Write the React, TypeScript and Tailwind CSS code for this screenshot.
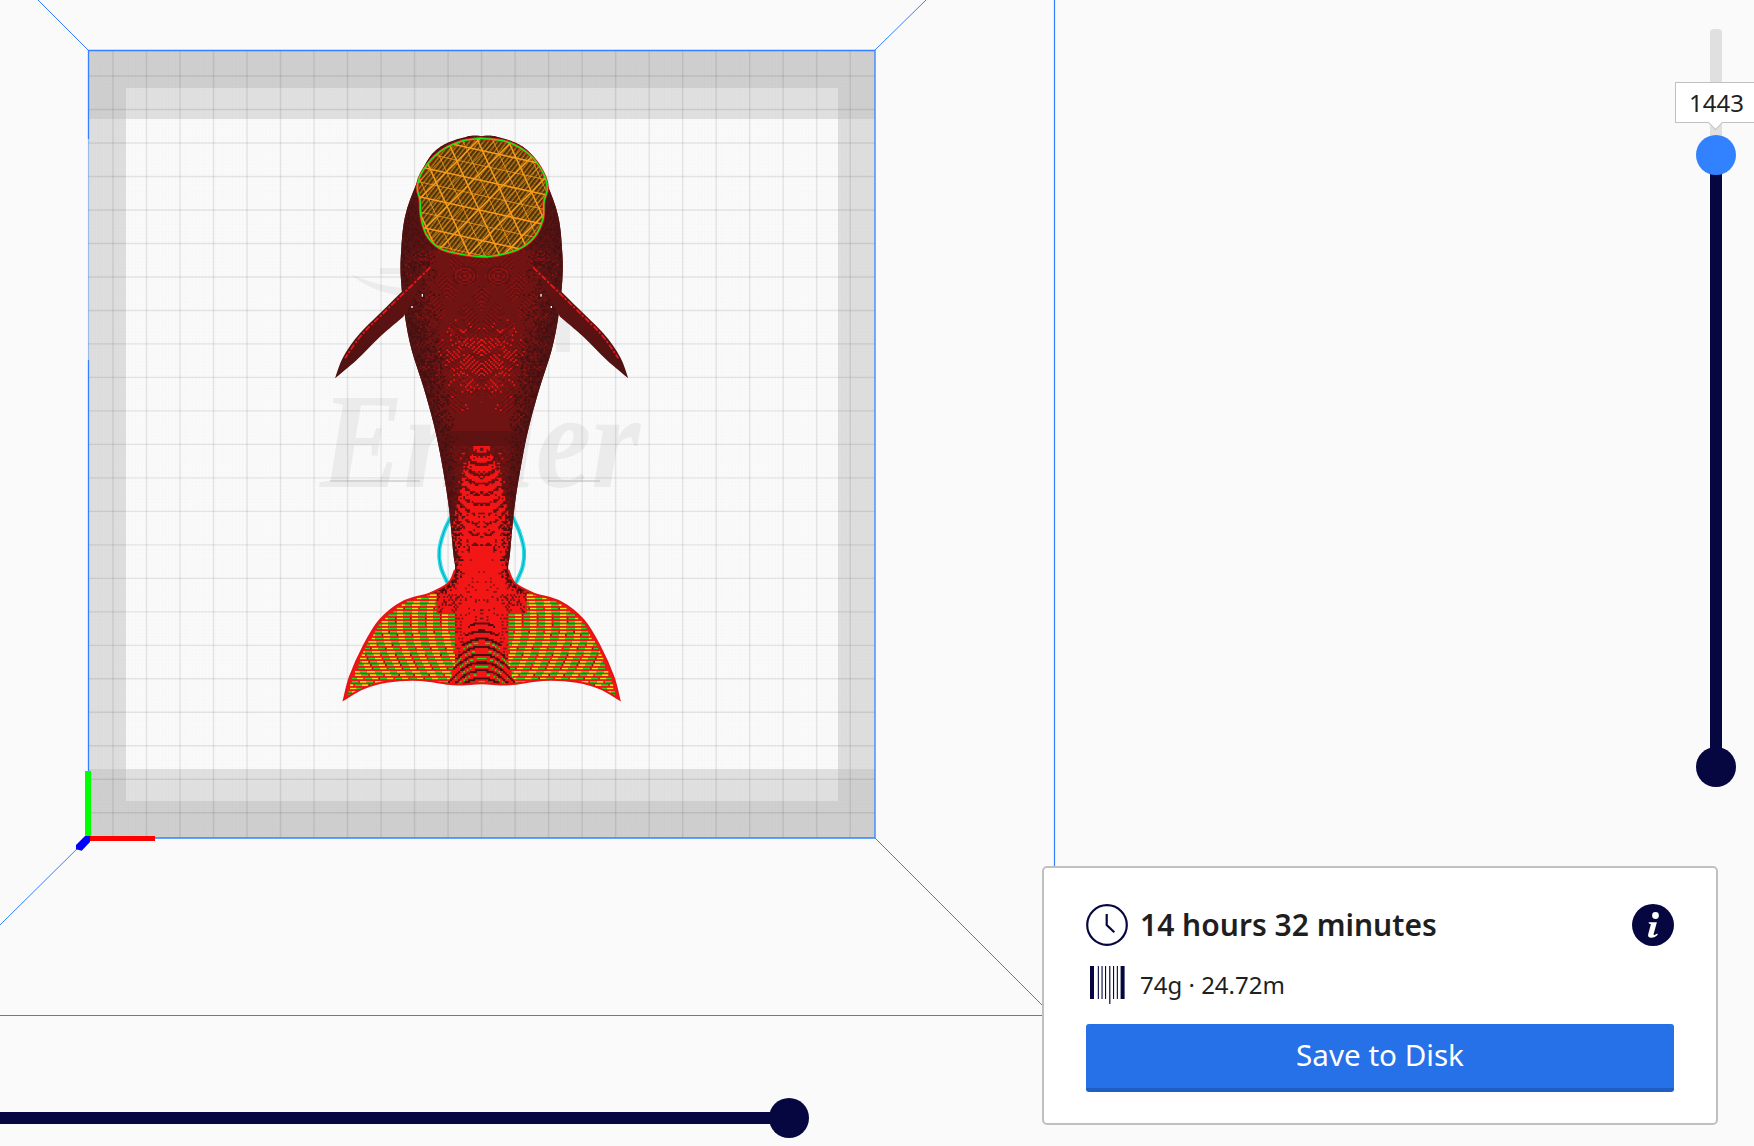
import { useMemo } from "react";

type Pt = [number, number];

const CX = 320 + 485 / 3;
const navy = "#060640";

// outline points are in 3x zoom units, origin at (320,120)
const LEFT: Pt[] = [
  [485, 48], [450, 48], [380, 70], [330, 110], [290, 190], [255, 290], [243, 400], [243, 480], [255, 590],
  [275, 690], [310, 800], [338, 900], [360, 1000], [385, 1150], [400, 1300], [405, 1350], [385, 1390],
  [330, 1420], [250, 1445], [180, 1500], [130, 1580], [90, 1670], [72, 1738],
];
const BOTTOM: Pt[] = [
  [72, 1738], [130, 1705], [200, 1685], [300, 1680], [400, 1693], [485, 1690], [570, 1693], [670, 1680],
  [770, 1685], [840, 1705], [898, 1738],
];
const mirror = (pts: Pt[]): Pt[] => pts.map(([x, y]) => [970 - x, y] as Pt).reverse();
const HEAD: Pt[] = [
  [480, 55], [560, 65], [630, 105], [670, 160], [682, 205], [672, 245], [668, 300], [640, 355], [590, 390],
  [500, 410], [420, 402], [360, 385], [320, 345], [303, 290], [300, 240], [292, 200], [310, 150], [360, 95], [420, 65],
];
const FIN: Pt[] = [[325, 438], [200, 560], [120, 640], [70, 710], [45, 775]];
const FIN_LOW: Pt[] = [[45, 775], [110, 720], [180, 650], [250, 590]];
const RING: Pt[] = [[393, 1190], [372, 1235], [358, 1290], [362, 1340], [382, 1388]];

function curve(p: Pt[]) {
  let d = "";
  for (let i = 0; i < p.length - 1; i++) {
    const a = p[Math.max(i - 1, 0)], b = p[i], c = p[i + 1], e = p[Math.min(i + 2, p.length - 1)];
    d += `C${b[0] + (c[0] - a[0]) / 6} ${b[1] + (c[1] - a[1]) / 6} ${c[0] - (e[0] - b[0]) / 6} ${c[1] - (e[1] - b[1]) / 6} ${c[0]} ${c[1]}`;
  }
  return d;
}
const start = (p: Pt[]) => `M${p[0][0]} ${p[0][1]}`;

const bodyPath = start(LEFT) + curve(LEFT) + curve(BOTTOM) + curve(mirror(LEFT)) + "Z";
const headPath = start(HEAD) + curve([...HEAD, HEAD[0]]) + "Z";
const finPath = start(FIN) + curve(FIN) + curve(FIN_LOW) + "L300 500Z";
const tailEdge = LEFT.slice(15);
const tailPath = start(tailEdge) + curve(tailEdge) + curve(BOTTOM) + curve(mirror(tailEdge));

const COLORS = ["#521414", "#5e1212", "#701313", "#8e1414", "#f21616", "#dce41a", "#22dc1c", "#451010"];

function halfWidth(y: number) {
  const z = (y - 120) * 3;
  for (let i = 0; i < LEFT.length - 1; i++) {
    const [x0, y0] = LEFT[i], [x1, y1] = LEFT[i + 1];
    if (z >= y0 && z <= y1 && y1 > y0) return (485 - (x0 + ((x1 - x0) * (z - y0)) / (y1 - y0))) / 3;
  }
  return 0;
}

function noise(a: number, b: number) {
  const s = Math.sin(a * 12.9898 + b * 78.233) * 43758.5453;
  return s - Math.floor(s);
}

const ramp = (a: number, b: number, v: number) => Math.min(Math.max((v - a) / (b - a), 0), 1);

// rough stand-in for the slicer's moire: returns a palette index per cell
function shade(dx: number, y: number, hw: number, ix: number, iy: number) {
  const r = dx / Math.max(hw, 1);
  const n = noise(ix, iy);
  const tri = Math.abs(((dx / 17) % 2) - 1);
  const wave = Math.sin((y + 15 * tri) * 1.35);

  if (y < 445) {
    const edge = ramp(0.5, 0.95, r);
    if (n < edge) return n < edge * 0.4 ? 7 : 0;
    const eye = Math.hypot(dx - 16, (y - 275) * 1.3);
    if (y < 292 && eye < 13) return Math.sin(eye * 1.5) > 0 ? 3 : 1;
    if (y < 250) return n > 0.5 ? 1 : 2;
    const fade = y > 395 ? (445 - y) / 50 : 1;
    const prob = Math.exp(-(((y - 358) / 26) ** 2)) * Math.max(0, 1 - dx / 62);
    if (wave > 0.7 && n < prob * 1.2) return 4;
    if (wave > 0.6 && n < prob * 2) return 3;
    const env = Math.sin(dx * 0.12 + y * 0.09) * Math.sin(dx * 0.07 - y * 0.05 + 1);
    const v = wave * env * fade;
    if (v > 0.35) return 3;
    if (v < -0.3) return 1;
    return fade < 0.3 ? 1 : 2;
  }

  if (y < 592) {
    const p = ramp(445, 530, y);
    const arc = Math.sin((y + dx * dx * 0.028) * 0.62);
    const edge = ramp(0.55, 0.95, r) * (1 - p * 0.45);
    if (n < edge) return n < edge * 0.4 ? 7 : 0;
    if (y > 550 && dx < 24) return n > 0.95 ? 3 : 4;
    if (r < 0.15 + p * 0.8 && arc > -0.4 && n > 0.2 - p * 0.2) return n > 0.96 ? 1 : 4;
    return n < p * 0.5 ? 4 : n > 0.6 ? 1 : 2;
  }

  // tail: arches down the middle, striped lobes to each side
  const arch = 10 + (y - 620) * 0.36;
  if (y > 620 && dx < arch) {
    const a = Math.sin((y - dx * dx * 0.02) * 0.8);
    if (a > 0.65) return 7;
    if (a < -0.92 && y > 640) return 6;
    return 4;
  }
  if (dx < 20) return n > 0.94 ? 2 : 4;
  if (y < 612 && dx < 44) return n > 0.72 ? 2 : 4;
  if (r > 0.975) return 4;
  if (iy % 2 === 0) return 4;
  if (dx < 26) return n > 0.5 ? 3 : 4;
  const band = Math.sin((dx + 0.006 * (y - 640) ** 2 + (y - 640) * 0.25) * 0.42);
  if (band > 0.1) return 5;
  if (band < -0.1) return 6;
  return n > 0.5 ? 3 : 4;
}

function useMoire() {
  return useMemo(() => {
    const cell = 5 / 3;
    const paths = COLORS.map(() => "");
    for (let iy = 0; iy * cell < 570; iy++) {
      const y = 136 + iy * cell;
      const hw = halfWidth(y);
      const n = Math.ceil((hw + 2) / cell);
      let from = 0;
      let cur = shade(0, y, hw, 0, iy);
      for (let ix = 1; ix <= n; ix++) {
        const c = ix === n ? -1 : shade(ix * cell, y, hw, ix, iy);
        if (c !== cur) {
          const a = (from * cell).toFixed(1), w = ((ix - from) * cell).toFixed(1), h = cell.toFixed(2), t = y.toFixed(1);
          paths[cur] += `M${CX + +a} ${t}h${w}v${h}h-${w}zM${CX - +a} ${t}h-${w}v${h}h${w}z`;
          from = ix;
          cur = c;
        }
      }
    }
    return paths;
  }, []);
}

function PlateGrid() {
  const lines = Array.from({ length: 23 }, (_, i) => i);
  return (
    <>
      <rect x={88} y={50} width={787} height={788} fill="#fafafa" />
      <rect x={126} y={88} width={712} height={713} fill="#e0e0e0" />
      <rect x={126} y={119} width={712} height={650} fill="#fafafa" />
      <rect x={88} y={50} width={787} height={38} fill="#cfcfcf" />
      <rect x={88} y={88} width={38} height={31} fill="#cfcfcf" />
      <rect x={838} y={88} width={37} height={31} fill="#cfcfcf" />
      <rect x={88} y={119} width={38} height={650} fill="#dedede" />
      <rect x={838} y={119} width={37} height={650} fill="#dedede" />
      <rect x={88} y={769} width={38} height={69} fill="#cfcfcf" />
      <rect x={838} y={769} width={37} height={69} fill="#cfcfcf" />
      <rect x={126} y={801} width={712} height={37} fill="#cfcfcf" />
      <rect x={88} y={50} width={787} height={788} fill="url(#fine)" />

      <text x={320} y={487} fontFamily="Liberation Serif" fontStyle="italic" fontWeight={700} fontSize={135} textLength={320} lengthAdjust="spacingAndGlyphs" fill="#ebebeb">
        Ender
      </text>
      <path d="M350 274 Q372 292 402 296 L402 288 Q378 286 350 274Z M380 268 h30 v6 h-30z M556 318 h14 v34 h-14z" fill="#ececec" />
      <path d="M330 481H420M548 481H600" stroke="#c4c4c4" strokeWidth={2} opacity={0.6} />

      {lines.map((i) => (
        <g key={i} stroke="#000" strokeOpacity={0.09} strokeWidth={1.4}>
          <line x1={113 + i * 33.51} x2={113 + i * 33.51} y1={50} y2={838} />
          <line y1={76 + i * 33.49} y2={76 + i * 33.49} x1={88} x2={875} />
        </g>
      ))}

      <g stroke="#3282ff" fill="none" strokeWidth={1}>
        <path d="M38 0L88 50M875 50L926 0M875 838L1043 1006M88 838L0 925" />
        <path d="M88.5 838V360M88.5 139V50.5H875V838H88" strokeWidth={1.3} />
        <path d="M88.5 139V360" strokeOpacity={0.35} strokeWidth={1.3} />
        <path d="M0 1015.5H1043M1054.5 0V867" strokeWidth={1.2} />
      </g>

      <rect x={85} y={771} width={6} height={66} fill="#00ff00" />
      <rect x={90} y={836} width={65} height={5} fill="#ff0000" />
      <path d="M85 836H90V842L81.7 850.7L76 849.3V845Z" fill="#0000ff" />
    </>
  );
}

function Dolphin() {
  const moire = useMoire();
  const fam1 = [-15, 30, 75, 120, 165, 210, 255, 300, 345];
  const fam2 = [430, 482, 535, 587, 640, 692, 745, 797, 850, 902, 955];
  const fam3 = [-1380, -1280, -1180, -1080, -980, -880, -780, -680, -580, -480, -380];
  return (
    <g transform={`translate(320 120) scale(${1 / 3})`}>
      {[RING, mirror(RING)].map((r, i) => (
        <g key={i} fill="none">
          <path d={start(r) + curve(r)} stroke="#22dbe8" strokeWidth={12} />
          <path d={start(r) + curve(r)} stroke="#0d7f90" strokeWidth={2} />
        </g>
      ))}

      <path d={bodyPath} fill="#5e1212" />
      <g clipPath="url(#bodyClip)">
        <g transform="scale(3) translate(-320 -120)">
          {moire.map((d, i) => (
            <path key={i} d={d} fill={COLORS[i]} />
          ))}
        </g>
      </g>
      <path d={tailPath} fill="none" stroke="#e81414" strokeWidth={6} />

      {[false, true].map((flip) => (
        <g key={String(flip)} transform={flip ? "translate(970 0) scale(-1 1)" : undefined}>
          <path d={finPath} fill="url(#finFill)" />
          <path d={start(FIN) + curve(FIN.slice(0, 4))} fill="none" stroke="#f01818" strokeWidth={5} strokeDasharray="18 5 7 6" transform="translate(5 5)" />
          <rect x={305} y={522} width={4} height={8} fill="#fff" />
          <rect x={274} y={558} width={4} height={6} fill="#fff" />
        </g>
      ))}

      <path d={headPath} fill="url(#infill)" stroke="#ee1616" strokeWidth={9} />
      <g clipPath="url(#headClip)" stroke="#f79c1c">
        {fam1.map((b, i) => <line key={b} x1={280} x2={700} y1={0.22 * 280 + b} y2={0.22 * 700 + b} strokeWidth={i % 2 ? 2.4 : 4.5} />)}
        {fam2.map((c, i) => <line key={c} x1={280} x2={700} y1={c - 280} y2={c - 700} strokeWidth={i % 2 ? 2.4 : 4.5} />)}
        {fam3.map((d, i) => <line key={d} x1={(40 - d) / 2.2} x2={(420 - d) / 2.2} y1={40} y2={420} strokeWidth={i % 2 ? 2.4 : 4.5} />)}
      </g>
      <path d={headPath} fill="none" stroke="#16e81c" strokeWidth={4.5} />
    </g>
  );
}

function InfoIcon() {
  return (
    <svg width={42} height={42} viewBox="0 0 42 42">
      <circle cx={21} cy={21} r={21} fill={navy} />
      <circle cx={23.5} cy={11.5} r={3.4} fill="#fff" />
      <path d="M16.5 18.2h8.4l-3.2 11.6c-.3 1.2.4 1.5 1.3 1l2.2-1.2.6 1.2c-2 1.9-4 3-6.6 3-2.7 0-3.6-1.6-2.9-4l2.4-8.7c.3-1-.3-1.4-1.6-1.4z" fill="#fff" />
    </svg>
  );
}

function ClockIcon() {
  return (
    <svg width={42} height={42} viewBox="0 0 42 42" fill="none" stroke={navy} strokeWidth={2.2}>
      <circle cx={21} cy={21} r={19.8} />
      <path d="M20.7 10V21L28.3 28.3" />
    </svg>
  );
}

function SpoolIcon() {
  const thin = [7.8, 11.5, 15, 23, 26.8];
  return (
    <svg width={35} height={38} viewBox="0 0 35 38" fill={navy}>
      <rect x={0} y={0} width={4} height={33} />
      <rect x={30.6} y={0} width={4} height={33} />
      {thin.map((x) => <rect key={x} x={x} y={0} width={1.1} height={33} />)}
      <rect x={19.2} y={0} width={1.2} height={38} />
    </svg>
  );
}

function VerticalSlider() {
  return (
    <div className="absolute left-[1696px] top-[29px] flex h-[758px] w-[40px] flex-col items-center">
      <div className="h-[126px] w-[12px] rounded-t-[4px] bg-[#e0e0e0]" />
      <div className="h-[612px] w-[12px] bg-[#060640]" />
      <div className="absolute top-[106px] h-[40px] w-[40px] rounded-full bg-[#3282ff]" />
      <div className="absolute bottom-0 h-[40px] w-[40px] rounded-full bg-[#060640]" />
      <div className="absolute left-[-21px] top-[53px] flex h-[41px] w-[82px] items-center justify-center border border-[#c0c0c0] bg-white pl-[1px] text-[24px] text-[#1f1f1f]">
        1443
        <div className="absolute bottom-[-6px] left-[34px] h-[11px] w-[11px] rotate-45 border-b border-r border-[#c0c0c0] bg-white" />
      </div>
    </div>
  );
}

export default function App() {
  return (
    <div className="relative h-screen w-full overflow-hidden bg-[#fafafa] font-['Noto_Sans',sans-serif]">
      <svg className="absolute inset-0" width={1754} height={1146} viewBox="0 0 1754 1146">
        <defs>
          <pattern id="fine" width={3.35} height={3.35} patternUnits="userSpaceOnUse" x={88} y={50}>
            <path d="M0 0H3.35M0 0V3.35" stroke="#000" strokeOpacity={0.016} strokeWidth={1} />
          </pattern>
          <pattern id="infill" width={11} height={11} patternUnits="userSpaceOnUse" patternTransform="rotate(-52)">
            <rect width={11} height={11} fill="#a86c14" />
            <rect width={11} height={6.5} fill="#4e3208" />
            <rect x={2} y={8} width={3} height={2} fill="#e8981e" />
          </pattern>
          <linearGradient id="finFill" x1="0" y1="1" x2="1" y2="0">
            <stop offset="0" stopColor="#4e1212" />
            <stop offset="1" stopColor="#661212" />
          </linearGradient>
          <clipPath id="bodyClip"><path d={bodyPath} /></clipPath>
          <clipPath id="headClip"><path d={headPath} /></clipPath>
        </defs>
        <PlateGrid />
        <Dolphin />
      </svg>

      <VerticalSlider />

      <div className="absolute left-0 top-[1098px] flex h-[40px] w-[809px] items-center">
        <div className="h-[12px] w-[780px] bg-[#060640]" />
        <div className="ml-[-11px] h-[40px] w-[40px] rounded-full bg-[#060640]" />
      </div>

      <div className="absolute left-[1042px] top-[866px] h-[259px] w-[676px] rounded-[5px] border-2 border-[#c0c0c0] bg-white px-[42px] pt-[36px]">
        <div className="flex h-[42px] items-center gap-[12px]">
          <ClockIcon />
          <span className="mb-[2px] text-[30px] font-semibold text-[#1f1f1f]">14 hours 32 minutes</span>
          <div className="ml-auto">
            <InfoIcon />
          </div>
        </div>
        <div className="mt-[20px] flex h-[38px] items-center">
          <div className="ml-[4px] mr-[15px]">
            <SpoolIcon />
          </div>
          <span className="text-[24px] text-[#1f1f1f]">74g · 24.72m</span>
        </div>
        <button className="mt-[20px] flex h-[68px] w-full items-center justify-center rounded-[3px] border-b-4 border-[#1f5fc4] bg-[#2671e8] pb-[1px] text-[29.6px] text-white">
          Save to Disk
        </button>
      </div>
    </div>
  );
}
